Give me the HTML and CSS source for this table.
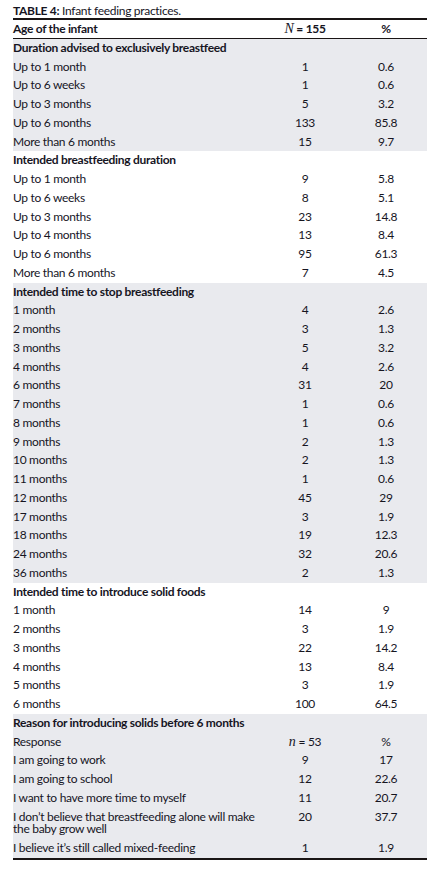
FILE: index.html
```html
<!DOCTYPE html>
<html>
<head>
<meta charset="utf-8">
<link rel="stylesheet" href="styles.css">
</head>
<body>
<div class="wrap">
  <div class="caption"><b>TABLE 4:</b> Infant feeding practices.</div>
  <table class="tbl">
    <colgroup><col class="c1"><col class="c2"><col class="c3"></colgroup>
    <thead>
      <tr><th class="lbl">Age of the infant</th><th><span class="it">N</span> = 155</th><th>%</th></tr>
    </thead>
    <tbody class="gray">
      <tr class="sec"><td colspan="3">Duration advised to exclusively breastfeed</td></tr>
      <tr><td>Up to 1 month</td><td>1</td><td>0.6</td></tr>
      <tr><td>Up to 6 weeks</td><td>1</td><td>0.6</td></tr>
      <tr><td>Up to 3 months</td><td>5</td><td>3.2</td></tr>
      <tr><td>Up to 6 months</td><td>133</td><td>85.8</td></tr>
      <tr><td>More than 6 months</td><td>15</td><td>9.7</td></tr>
    </tbody>
    <tbody>
      <tr class="sec"><td colspan="3">Intended breastfeeding duration</td></tr>
      <tr><td>Up to 1 month</td><td>9</td><td>5.8</td></tr>
      <tr><td>Up to 6 weeks</td><td>8</td><td>5.1</td></tr>
      <tr><td>Up to 3 months</td><td>23</td><td>14.8</td></tr>
      <tr><td>Up to 4 months</td><td>13</td><td>8.4</td></tr>
      <tr><td>Up to 6 months</td><td>95</td><td>61.3</td></tr>
      <tr><td>More than 6 months</td><td>7</td><td>4.5</td></tr>
    </tbody>
    <tbody class="gray">
      <tr class="sec"><td colspan="3">Intended time to stop breastfeeding</td></tr>
      <tr><td>1 month</td><td>4</td><td>2.6</td></tr>
      <tr><td>2 months</td><td>3</td><td>1.3</td></tr>
      <tr><td>3 months</td><td>5</td><td>3.2</td></tr>
      <tr><td>4 months</td><td>4</td><td>2.6</td></tr>
      <tr><td>6 months</td><td>31</td><td>20</td></tr>
      <tr><td>7 months</td><td>1</td><td>0.6</td></tr>
      <tr><td>8 months</td><td>1</td><td>0.6</td></tr>
      <tr><td>9 months</td><td>2</td><td>1.3</td></tr>
      <tr><td>10 months</td><td>2</td><td>1.3</td></tr>
      <tr><td>11 months</td><td>1</td><td>0.6</td></tr>
      <tr><td>12 months</td><td>45</td><td>29</td></tr>
      <tr><td>17 months</td><td>3</td><td>1.9</td></tr>
      <tr><td>18 months</td><td>19</td><td>12.3</td></tr>
      <tr><td>24 months</td><td>32</td><td>20.6</td></tr>
      <tr><td>36 months</td><td>2</td><td>1.3</td></tr>
    </tbody>
    <tbody>
      <tr class="sec"><td colspan="3">Intended time to introduce solid foods</td></tr>
      <tr><td>1 month</td><td>14</td><td>9</td></tr>
      <tr><td>2 months</td><td>3</td><td>1.9</td></tr>
      <tr><td>3 months</td><td>22</td><td>14.2</td></tr>
      <tr><td>4 months</td><td>13</td><td>8.4</td></tr>
      <tr><td>5 months</td><td>3</td><td>1.9</td></tr>
      <tr><td>6 months</td><td>100</td><td>64.5</td></tr>
    </tbody>
    <tbody class="gray last">
      <tr class="sec"><td colspan="3">Reason for introducing solids before 6 months</td></tr>
      <tr><td>Response</td><td><span class="it">n</span> = 53</td><td>%</td></tr>
      <tr><td>I am going to work</td><td>9</td><td>17</td></tr>
      <tr><td>I am going to school</td><td>12</td><td>22.6</td></tr>
      <tr><td>I want to have more time to myself</td><td>11</td><td>20.7</td></tr>
      <tr><td>I don’t believe that breastfeeding alone will make the baby grow well</td><td>20</td><td>37.7</td></tr>
      <tr><td>I believe it’s still called mixed-feeding</td><td>1</td><td>1.9</td></tr>
    </tbody>
  </table>
</div>
</body>
</html>
```

FILE: styles.css
```css
html, body {
  margin: 0;
  padding: 0;
  background: #ffffff;
}
body {
  font-family: Lato, "Open Sans", sans-serif;
  color: #16151f;
  font-size: 12px;
  letter-spacing: -0.3px;
}
.wrap {
  padding: 3px 14px 0 13px;
  width: 414px;
}
.caption {
  line-height: 15px;
  height: 15px;
}
.caption b {
  font-weight: 700;
}
.tbl {
  width: 414px;
  border-collapse: collapse;
  table-layout: fixed;
  border-top: 2px solid #1a1515;
}
.c1 { width: 252px; }
.c2 { width: 80px; }
.c3 { width: 82px; }
.tbl th, .tbl td {
  padding: 3px 0 3px 0;
  line-height: 12.75px;
  vertical-align: top;
  text-align: center;
  font-weight: 400;
}
.tbl th {
  font-weight: 700;
  padding-top: 3px;
  padding-bottom: 2px;
}
.tbl thead tr {
  border-bottom: 1px solid #1a1515;
}
.tbl th.lbl, .tbl td:first-child {
  text-align: left;
}
.tbl tr.sec td {
  font-weight: 700;
}
.it {
  font-family: "Liberation Serif", serif;
  font-style: italic;
  font-size: 14px;
  font-weight: 400;
  letter-spacing: 0;
}
.gray {
  background: #e9eaee;
}
.last tr:last-child {
  border-bottom: 2px solid #1a1515;
}
```
